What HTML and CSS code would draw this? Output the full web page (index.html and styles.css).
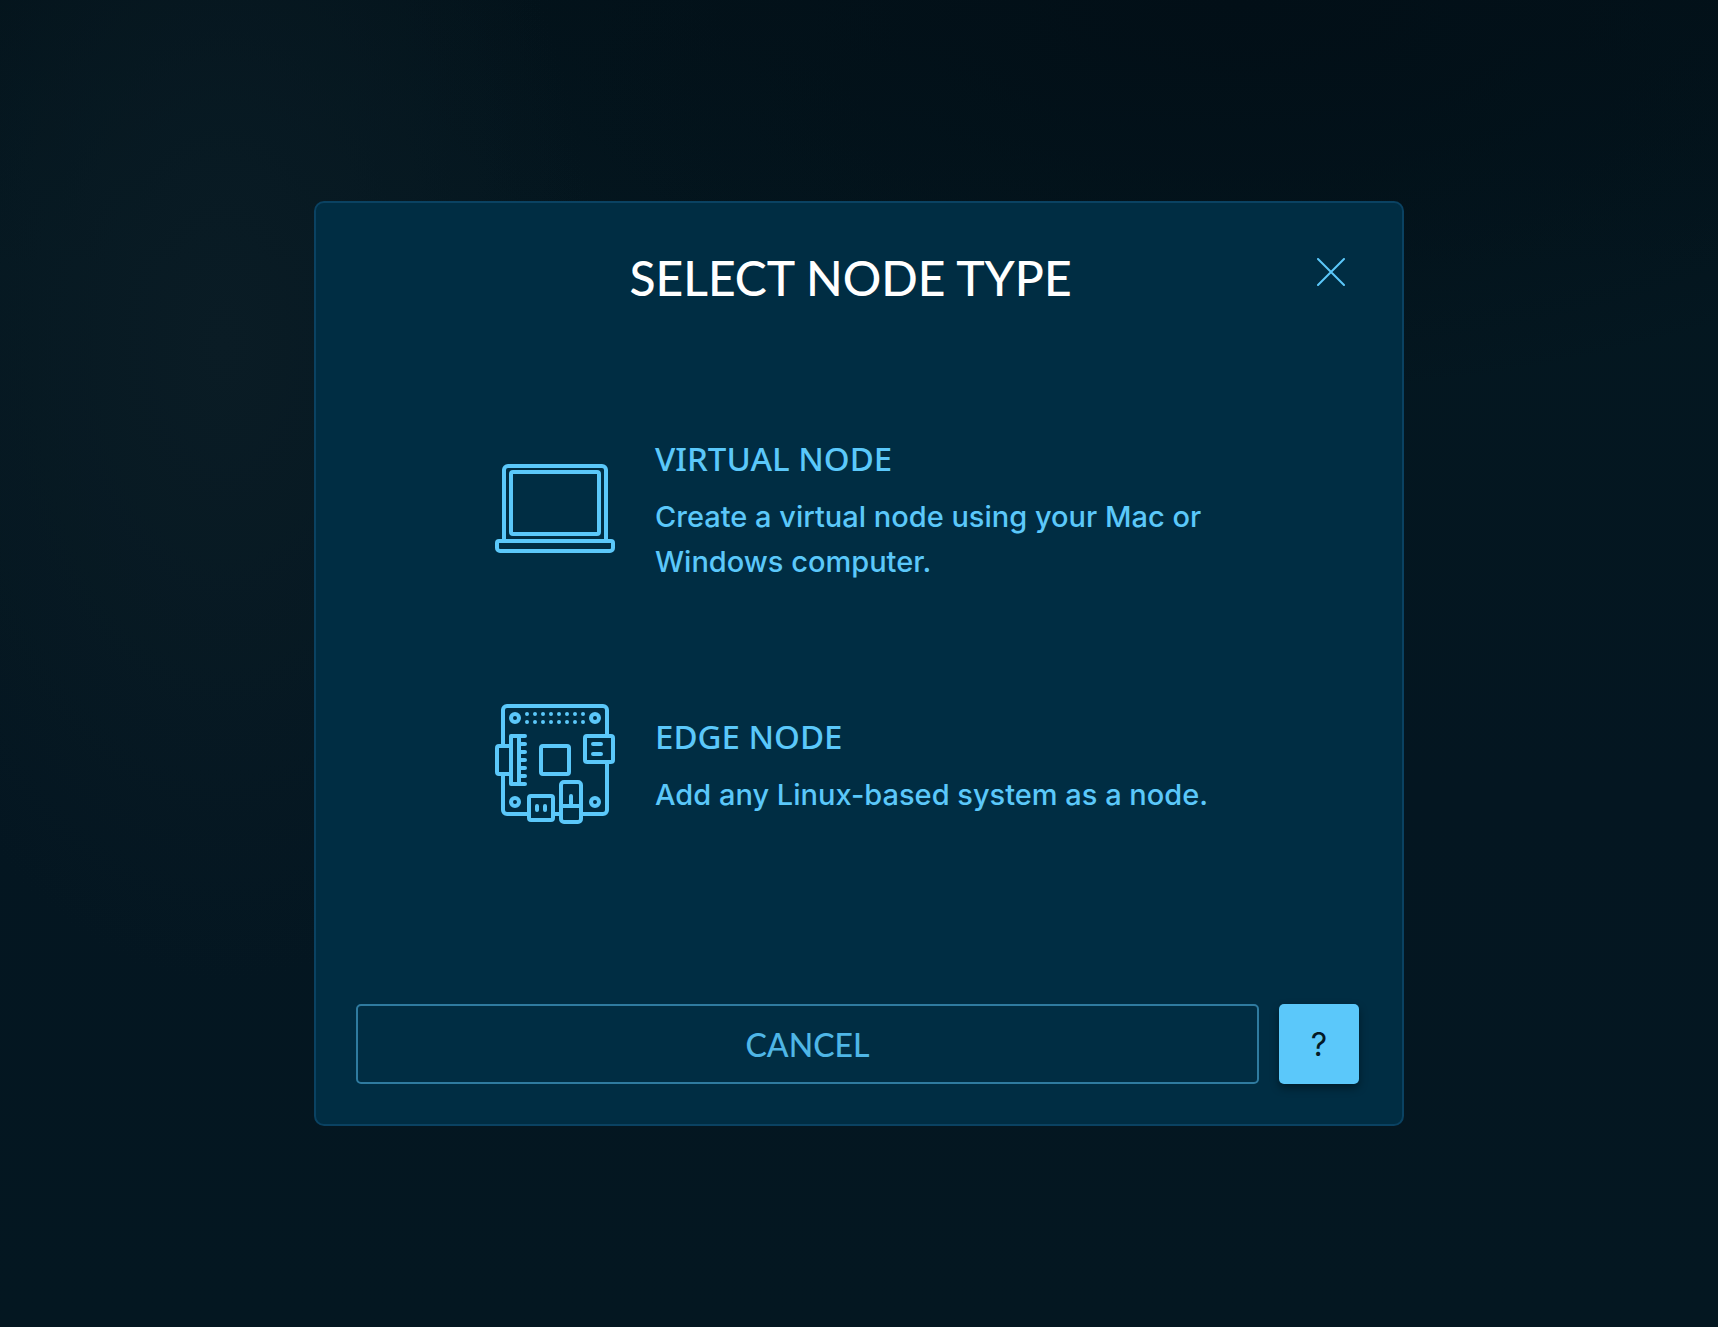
FILE: index.html
```html
<!DOCTYPE html>
<html lang="en">
<head>
<meta charset="utf-8">
<meta name="viewport" content="width=device-width, initial-scale=1">
<title>Select node type</title>
<link rel="stylesheet" href="styles.css">
</head>
<body>
<main class="backdrop">
  <section class="dialog" role="dialog" aria-modal="true" aria-labelledby="dialog-title">
    <header class="dialog-header">
      <h1 class="dialog-title" id="dialog-title">SELECT NODE TYPE</h1>
      <button class="close" type="button" aria-label="Close">
        <svg width="28" height="28" viewBox="0 0 28 28" fill="none" stroke="currentColor" stroke-width="2" stroke-linecap="round" aria-hidden="true"><path d="M1 1l26 26M27 1L1 27"/></svg>
      </button>
    </header>

    <div class="options">
      <button class="option" type="button">
        <svg class="option-icon" width="120" height="89" viewBox="0 0 120 89" aria-hidden="true">
          <path d="M9 77V6a4 4 0 0 1 4-4h94a4 4 0 0 1 4 4v71"/>
          <rect x="16" y="8" width="88" height="62" rx="2"/>
          <path d="M4 77h112a2 2 0 0 1 2 2v5a3 3 0 0 1-3 3H5a3 3 0 0 1-3-3v-5a2 2 0 0 1 2-2z"/>
        </svg>
        <span class="option-text">
          <span class="option-name">VIRTUAL NODE</span>
          <span class="option-info">Create a virtual node using your Mac or Windows computer.</span>
        </span>
      </button>

      <button class="option" type="button">
        <svg class="option-icon" width="120" height="120" viewBox="0 0 120 120" aria-hidden="true">
          <rect x="8" y="2" width="104" height="108" rx="4"/>
          <rect x="2" y="42" width="16" height="28" rx="2"/>
          <path d="M30 32H16v48h14M24 32v48"/>
          <path d="M24 40h6M24 48h6M24 56h6M24 64h6M24 72h6"/>
          <rect x="46" y="42" width="28" height="28" rx="2"/>
          <rect x="90" y="32" width="28" height="26" rx="2"/>
          <path d="M98 40h8M98 50h8"/>
          <rect x="34" y="92" width="24" height="24" rx="2"/>
          <path d="M42 102v4M50 102v4"/>
          <rect x="66" y="78" width="20" height="40" rx="3"/>
          <path d="M66 102h20M76 92v10"/>
          <circle cx="20" cy="14" r="4"/>
          <circle cx="100" cy="14" r="4"/>
          <circle cx="20" cy="98" r="4"/>
          <circle cx="100" cy="98" r="4"/>
          <path d="M32 10h0M40 10h0M48 10h0M56 10h0M64 10h0M72 10h0M80 10h0M88 10h0M32 18h0M40 18h0M48 18h0M56 18h0M64 18h0M72 18h0M80 18h0M88 18h0"/>
        </svg>
        <span class="option-text">
          <span class="option-name">EDGE NODE</span>
          <span class="option-info">Add any Linux-based system as a node.</span>
        </span>
      </button>
    </div>

    <footer class="dialog-footer">
      <button class="cancel" type="button">CANCEL</button>
      <button class="help" type="button" aria-label="Help">?</button>
    </footer>
  </section>
</main>
</body>
</html>
```
FILE: styles.css
```css
:root {
  --panel: #002d43;
  --accent: #5bc8fa;
}

* {
  box-sizing: border-box;
}

body {
  margin: 0;
  font-family: Lato, "Open Sans", sans-serif;
  background-color: #03141f;
}

button {
  margin: 0;
  padding: 0;
  border: 0;
  background: none;
  color: var(--accent);
  font: inherit;
  cursor: pointer;
}

.backdrop {
  display: flex;
  align-items: center;
  justify-content: center;
  min-height: 100vh;
  padding: 24px;
  background:
    radial-gradient(ellipse 22% 48% at 13% 26%, #0a1c25, #0a1c2500),
    radial-gradient(ellipse 50% 30% at 72% 0%, #020f17, #020f1700),
    linear-gradient(180deg, #03131b, #041720 20%, #041621 60%, #041721);
}

.dialog {
  width: 100%;
  max-width: 1090px;
  padding: 40px 43px 40px 40px;
  border: 2px solid #0a4262;
  border-radius: 10px;
  background: var(--panel);
}

.dialog-header {
  display: flex;
  align-items: center;
  padding-left: 42px;
}

.dialog-title {
  flex: 1;
  margin: 0;
  color: #fff;
  font-size: 48px;
  font-weight: 500;
  line-height: 70px;
  text-align: center;
}

.close {
  display: grid;
  place-items: center;
  align-self: flex-start;
  width: 56px;
  height: 58px;
}

.options {
  display: grid;
  gap: 120px;
  max-width: 725px;
  margin: 0 auto;
  padding: 120px 0 180px;
}

.option {
  display: flex;
  align-items: center;
  gap: 40px;
  text-align: left;
}

.option-icon {
  flex: none;
  fill: var(--panel);
  stroke: currentColor;
  stroke-width: 4;
  stroke-linecap: round;
  stroke-linejoin: round;
}

.option-text {
  display: grid;
  gap: 10px;
}

.option-name {
  font-family: "Noto Sans", "Open Sans", sans-serif;
  font-size: 33px;
  font-weight: 500;
  line-height: 51px;
}

.option-info {
  font-family: Inter, "Open Sans", sans-serif;
  font-size: 29px;
  font-weight: 500;
  line-height: 45px;
}

.dialog-footer {
  display: flex;
  gap: 20px;
}

.cancel,
.help {
  height: 80px;
  border-radius: 5px;
  font-size: 32px;
  font-weight: 500;
}

.cancel {
  flex: 1;
  border: 2px solid #2f7ba0;
  color: #4fb6e6;
}

.help {
  width: 80px;
  background: var(--accent);
  box-shadow: 0 4px 8px #00000066;
  color: #051a26;
  font-family: Inter, sans-serif;
  font-weight: 400;
}
```
